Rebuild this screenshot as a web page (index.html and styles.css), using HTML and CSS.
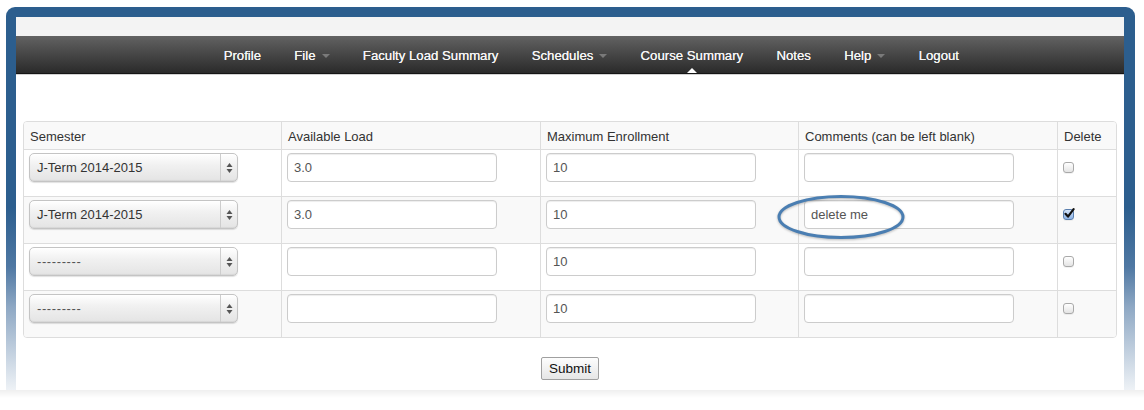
FILE: index.html
```html
<!DOCTYPE html>
<html lang="en">
<head>
<meta charset="utf-8">
<title>Course Summary</title>
<link rel="stylesheet" href="styles.css">
</head>
<body>
<div class="window">
  <div class="screen">
    <div class="topstrip"></div>
    <nav class="navbar">
      <ul class="nav">
        <li class="nav-item">Profile</li>
        <li class="nav-item">File<span class="caret"></span></li>
        <li class="nav-item">Faculty Load Summary</li>
        <li class="nav-item">Schedules<span class="caret"></span></li>
        <li class="nav-item active">Course Summary</li>
        <li class="nav-item">Notes</li>
        <li class="nav-item">Help<span class="caret"></span></li>
        <li class="nav-item">Logout</li>
      </ul>
    </nav>
    <main class="content">
      <div class="tbl">
        <div class="row head striped">
          <div class="cell">Semester</div>
          <div class="cell">Available Load</div>
          <div class="cell">Maximum Enrollment</div>
          <div class="cell">Comments (can be left blank)</div>
          <div class="cell">Delete</div>
        </div>
        <div class="row">
          <div class="cell"><div class="select"><span class="sel-value">J-Term 2014-2015</span><span class="sel-arrows"><svg width="7" height="12" viewBox="0 0 7 12"><path d="M3.5 1 L6.5 5 H0.5 Z" fill="#555"/><path d="M3.5 11 L6.5 7 H0.5 Z" fill="#555"/></svg></span></div></div>
          <div class="cell"><input class="field" type="text" value="3.0"></div>
          <div class="cell"><input class="field" type="text" value="10"></div>
          <div class="cell"><input class="field" type="text" value=""></div>
          <div class="cell"><span class="check"></span></div>
        </div>
        <div class="row striped">
          <div class="cell"><div class="select"><span class="sel-value">J-Term 2014-2015</span><span class="sel-arrows"><svg width="7" height="12" viewBox="0 0 7 12"><path d="M3.5 1 L6.5 5 H0.5 Z" fill="#555"/><path d="M3.5 11 L6.5 7 H0.5 Z" fill="#555"/></svg></span></div></div>
          <div class="cell"><input class="field" type="text" value="3.0"></div>
          <div class="cell"><input class="field" type="text" value="10"></div>
          <div class="cell annotated"><input class="field" type="text" value="delete me"><svg class="ring" width="132" height="46" viewBox="0 0 132 46"><ellipse cx="66" cy="23" rx="62" ry="20.5" fill="none" stroke="#4a7eb2" stroke-width="3"/></svg></div>
          <div class="cell"><span class="check checked"><svg width="12" height="12" viewBox="0 0 12 12"><path d="M2.5 5.8 L5 8.6 L10.6 1.2" fill="none" stroke="#111" stroke-width="2.2" stroke-linecap="round" stroke-linejoin="round"/></svg></span></div>
        </div>
        <div class="row">
          <div class="cell"><div class="select"><span class="sel-value dashes">---------</span><span class="sel-arrows"><svg width="7" height="12" viewBox="0 0 7 12"><path d="M3.5 1 L6.5 5 H0.5 Z" fill="#555"/><path d="M3.5 11 L6.5 7 H0.5 Z" fill="#555"/></svg></span></div></div>
          <div class="cell"><input class="field" type="text" value=""></div>
          <div class="cell"><input class="field" type="text" value="10"></div>
          <div class="cell"><input class="field" type="text" value=""></div>
          <div class="cell"><span class="check"></span></div>
        </div>
        <div class="row striped last">
          <div class="cell"><div class="select"><span class="sel-value dashes">---------</span><span class="sel-arrows"><svg width="7" height="12" viewBox="0 0 7 12"><path d="M3.5 1 L6.5 5 H0.5 Z" fill="#555"/><path d="M3.5 11 L6.5 7 H0.5 Z" fill="#555"/></svg></span></div></div>
          <div class="cell"><input class="field" type="text" value=""></div>
          <div class="cell"><input class="field" type="text" value="10"></div>
          <div class="cell"><input class="field" type="text" value=""></div>
          <div class="cell"><span class="check"></span></div>
        </div>
      </div>
      <div class="actions"><button class="submit" type="button">Submit</button></div>
    </main>
  </div>
</div>
<div class="under-shadow"></div>
</body>
</html>
```

FILE: styles.css
```css
html, body {
  margin: 0;
  padding: 0;
  background: #ffffff;
}

body {
  font-family: "Liberation Sans", Arial, sans-serif;
  color: #333;
  width: 1144px;
  height: 410px;
  overflow: hidden;
}

.window {
  margin: 7px 0 0 6px;
  width: 1129px;
  height: 383px;
  box-sizing: border-box;
  padding: 10px 11px 0 10px;
  border-radius: 9px 9px 0 0;
  background: linear-gradient(to bottom, #2c5e8e 0px, #2c5e8e 200px, #4f78a3 260px, #8ea8c4 300px, #c2d0df 345px, #eef2f6 383px);
}

.screen {
  width: 1108px;
  height: 373px;
  background: #ffffff;
  display: flex;
  flex-direction: column;
}

.topstrip {
  height: 19px;
  background: #f3f3f3;
}

.navbar {
  height: 37px;
  border-bottom: 1px solid #151515;
  box-shadow: 0 1px 0 #d2d2d2;
  background: linear-gradient(to bottom, #626262, #2a2a2a);
  padding-left: 191px;
}

.nav {
  list-style: none;
  margin: 0;
  padding: 0;
  display: flex;
  height: 100%;
}

.nav-item {
  position: relative;
  display: flex;
  align-items: center;
  padding: 1px 16.65px 0 16.65px;
  box-sizing: border-box;
  height: 100%;
  font-size: 13.2px;
  color: #f4f4f4;
  text-shadow: 0 0 0.4px #ffffff;
  white-space: nowrap;
}

.caret {
  display: inline-block;
  margin-left: 6px;
  margin-top: 2px;
  width: 0;
  height: 0;
  border-top: 4px solid #7a7a7a;
  border-left: 4px solid transparent;
  border-right: 4px solid transparent;
}

.nav-item.active::after {
  content: "";
  position: absolute;
  bottom: 0;
  left: 50%;
  margin-left: -5px;
  border-bottom: 5px solid #ffffff;
  border-left: 5px solid transparent;
  border-right: 5px solid transparent;
}

.content {
  padding: 47px 7px 0 7px;
  display: flex;
  flex-direction: column;
}

.tbl {
  display: grid;
  grid-template-columns: 257px 259px 258px 259px 59px;
  width: 1094px;
  box-sizing: border-box;
  border: 1px solid #dddddd;
  border-radius: 4px;
  overflow: hidden;
  font-size: 13px;
}

.row {
  display: contents;
}

.cell {
  box-sizing: border-box;
  height: 47px;
  padding: 3px 5px 0 5px;
  border-left: 1px solid #dddddd;
  border-top: 1px solid #dddddd;
  background: #ffffff;
}

.row .cell:first-child {
  border-left: 0;
}

.row.striped .cell {
  background: #f9f9f9;
}

.row.head .cell {
  border-top: 0;
  height: 27px;
  padding: 1px 5px 0 6px;
  display: flex;
  align-items: center;
  color: #333;
}

.select {
  width: 209px;
  height: 29px;
  box-sizing: border-box;
  display: flex;
  border: 1px solid #c4c4c4;
  border-radius: 5px;
  background: linear-gradient(to bottom, #ffffff 0%, #f1f1f1 40%, #e4e4e4 100%);
  box-shadow: inset 0 1px 0 #ffffff, inset 0 -1px 1px rgba(0, 0, 0, 0.06), 0 1px 1px rgba(0, 0, 0, 0.12);
}

.sel-value {
  flex: 1;
  display: flex;
  align-items: center;
  padding-left: 7px;
  font-size: 13px;
  color: #333;
}

.sel-value.dashes {
  letter-spacing: 0.6px;
  color: #555;
}

.sel-arrows {
  width: 16px;
  border-left: 1px solid #cdcdcd;
  display: flex;
  align-items: center;
  justify-content: center;
}

.field {
  display: block;
  width: 210px;
  height: 29px;
  box-sizing: border-box;
  margin: 0;
  padding: 0 6px;
  border: 1px solid #cccccc;
  border-radius: 4px;
  box-shadow: inset 0 1px 1px rgba(0, 0, 0, 0.075);
  background: #ffffff;
  font-family: "Liberation Sans", Arial, sans-serif;
  font-size: 13px;
  color: #555;
  outline: none;
}

.annotated {
  position: relative;
}

.ring {
  position: absolute;
  left: -24px;
  top: -3px;
  filter: drop-shadow(0 1px 1px rgba(0, 0, 0, 0.25));
}

.check {
  display: block;
  margin-top: 9px;
  width: 11px;
  height: 11px;
  box-sizing: border-box;
  border: 1px solid #a9a9a9;
  border-radius: 3px;
  background: linear-gradient(to bottom, #ffffff, #e4e4e4);
  box-shadow: 0 1px 0 rgba(0, 0, 0, 0.05);
  position: relative;
}

.check.checked {
  border-color: #5a7fae;
  background: linear-gradient(to bottom, #d3e3f8, #8db3e6);
}

.check.checked svg {
  position: absolute;
  left: -1px;
  top: -2px;
}

.actions {
  display: flex;
  justify-content: center;
  padding-top: 19px;
}

.submit {
  width: 58px;
  height: 23px;
  padding: 0;
  border: 1px solid #a0a0a0;
  border-radius: 2px;
  background: linear-gradient(to bottom, #fdfdfd, #e6e6e6);
  font-family: "Liberation Sans", Arial, sans-serif;
  font-size: 13.5px;
  color: #111;
}

.under-shadow {
  height: 8px;
  background: linear-gradient(to bottom, #efefef, #ffffff);
}
```
